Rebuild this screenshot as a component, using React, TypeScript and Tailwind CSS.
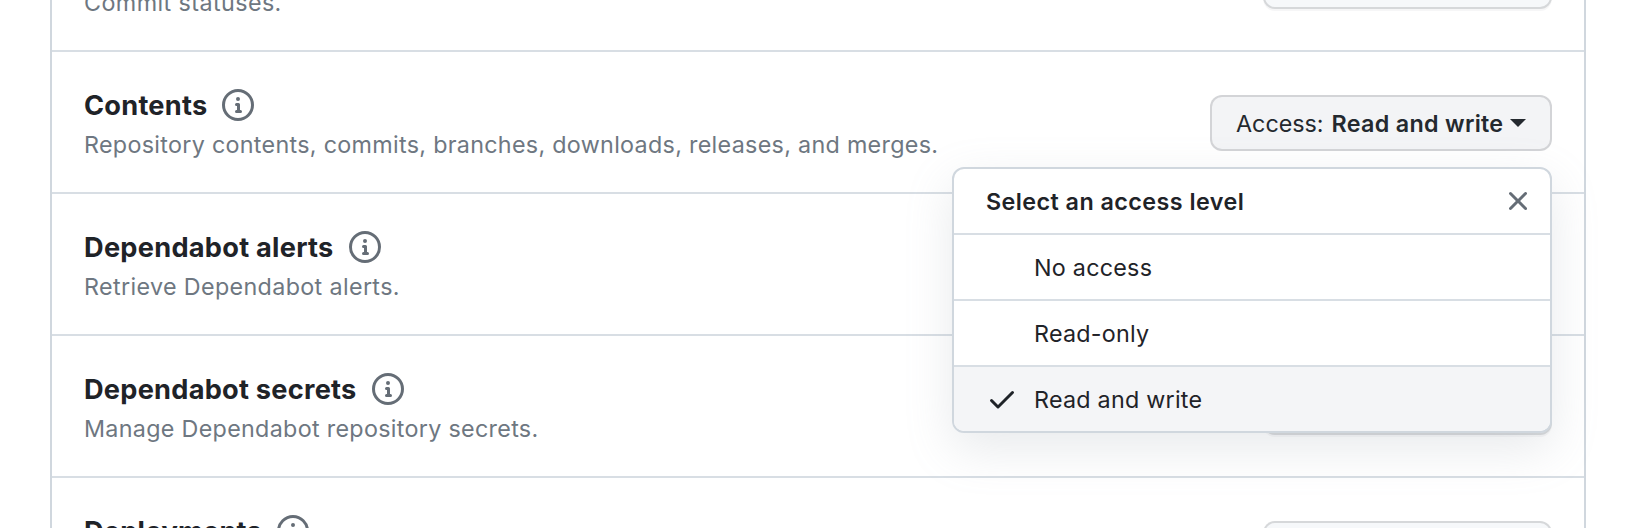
import React from "react";

type Permission = {
  name: string;
  description: string;
  access: string;
  titleSpacing: string;
  textSpacing: string;
  open?: boolean;
};

const permissions: Permission[] = [
  { name: "Commit statuses", description: "Commit statuses.", access: "No access", titleSpacing: "tracking-[0.3px]", textSpacing: "tracking-[0.42px]" },
  {
    name: "Contents",
    description: "Repository contents, commits, branches, downloads, releases, and merges.",
    access: "Read and write",
    titleSpacing: "tracking-[0.24px]",
    textSpacing: "tracking-[0.305px]",
    open: true,
  },
  { name: "Dependabot alerts", description: "Retrieve Dependabot alerts.", access: "No access", titleSpacing: "tracking-[0.26px]", textSpacing: "tracking-[0.36px]" },
  { name: "Dependabot secrets", description: "Manage Dependabot repository secrets.", access: "No access", titleSpacing: "tracking-[0.24px]", textSpacing: "tracking-[0.31px]" },
  { name: "Deployments", description: "Deployments and deployment statuses.", access: "No access", titleSpacing: "tracking-[0.2px]", textSpacing: "tracking-[0.3px]" },
];

const levels = ["No access", "Read-only", "Read and write"];

function InfoIcon() {
  return (
    <svg viewBox="0 0 16 16" className="h-8 w-8 shrink-0 fill-[#656d76]">
      <path d="M0 8a8 8 0 1 1 16 0A8 8 0 0 1 0 8Zm8-6.5a6.5 6.5 0 1 0 0 13 6.5 6.5 0 0 0 0-13ZM6.5 7.75A.75.75 0 0 1 7.25 7h1a.75.75 0 0 1 .75.75v2.75h.25a.75.75 0 0 1 0 1.5h-2a.75.75 0 0 1 0-1.5h.25v-2h-.25a.75.75 0 0 1-.75-.75ZM8 6a1 1 0 1 1 0-2 1 1 0 0 1 0 2Z" />
    </svg>
  );
}

function CheckIcon() {
  return (
    <svg viewBox="0 0 16 16" className="h-8 w-8 fill-[#1f2328]">
      <path d="M13.78 4.22a.75.75 0 0 1 0 1.06l-7.25 7.25a.75.75 0 0 1-1.06 0L2.22 9.28a.751.751 0 0 1 .018-1.042.751.751 0 0 1 1.042-.018L6 10.94l6.72-6.72a.75.75 0 0 1 1.06 0Z" />
    </svg>
  );
}

function CloseIcon() {
  return (
    <svg viewBox="0 0 16 16" className="h-8 w-8 fill-[#656d76]">
      <path d="M3.72 3.72a.75.75 0 0 1 1.06 0L8 6.94l3.22-3.22a.749.749 0 0 1 1.275.326.749.749 0 0 1-.215.734L9.06 8l3.22 3.22a.749.749 0 0 1-.326 1.275.749.749 0 0 1-.734-.215L8 9.06l-3.22 3.22a.751.751 0 0 1-1.042-.018.751.751 0 0 1-.018-1.042L6.94 8 3.72 4.78a.75.75 0 0 1 0-1.06Z" />
    </svg>
  );
}

function AccessMenu({ selected }: { selected: string }) {
  return (
    <div className="absolute top-[72px] right-0 z-10 w-[600px] overflow-hidden rounded-xl border-2 border-[#d0d7de] bg-white text-[23.3px] leading-9 text-[#1f2328] shadow-[0_16px_48px_rgba(140,149,159,0.2)]">
      <div className="flex h-[66px] items-center justify-between border-b-2 border-[#d8dee4] pr-4 pl-8">
        <span className="pt-0.5 font-semibold tracking-[0.45px]">Select an access level</span>
        <CloseIcon />
      </div>
      {levels.map((level) => (
        <div
          key={level}
          className={`flex h-[66px] items-center border-b-2 border-[#d8dee4] pl-8 last:h-16 last:border-b-0 ${level === selected ? "bg-[#f4f5f7]" : ""}`}
        >
          <span className="w-12">{level === selected && <CheckIcon />}</span>
          <span className="pt-0.5 tracking-[0.25px]">{level}</span>
        </div>
      ))}
    </div>
  );
}

function AccessButton({ access, open }: { access: string; open?: boolean }) {
  return (
    <div className="relative mt-[43px]">
      <button
        className={`flex h-14 items-center rounded-xl border-2 border-[#1f2328]/15 pl-6 text-[23.3px] whitespace-nowrap text-[#24292f] ${
          open ? "w-[342px] bg-[#f3f4f6]" : "w-[289px] bg-[#f6f8fa] shadow-[0_2px_0_rgba(31,35,40,0.04)]"
        }`}
      >
        <span className="pt-0.5">Access:</span>
        <span className="ml-2 pt-0.5 font-semibold tracking-[0.3px]">{access}</span>
        <span className="ml-[7px] border-x-8 border-t-8 border-x-transparent border-t-[#24292f]" />
      </button>
      {open && <AccessMenu selected={access} />}
    </div>
  );
}

function PermissionRow({ permission }: { permission: Permission }) {
  const { name, description, access, open, titleSpacing, textSpacing } = permission;
  return (
    <li className="flex h-[142px] items-start justify-between border-b-2 border-[#d8dee4] px-8">
      <div className="pt-8">
        <div className="flex h-[42px] items-center gap-[15px]">
          <h3 className={`pt-0.5 text-[27.2px] leading-10 font-[650] text-[#1f2328] ${titleSpacing}`}>{name}</h3>
          <InfoIcon />
        </div>
        <p className={`pt-px text-[23.3px] leading-9 text-[#6e7781] ${textSpacing}`}>{description}</p>
      </div>
      <AccessButton access={access} open={open} />
    </li>
  );
}

export default function App() {
  return (
    <main className="h-[528px] w-[1636px] overflow-hidden bg-white font-['Inter','Liberation_Sans',sans-serif]">
      <ul className="mt-[-90px] ml-[50px] w-[1536px] border-x-2 border-[#d0d7de]">
        {permissions.map((permission) => (
          <PermissionRow key={permission.name} permission={permission} />
        ))}
      </ul>
    </main>
  );
}
